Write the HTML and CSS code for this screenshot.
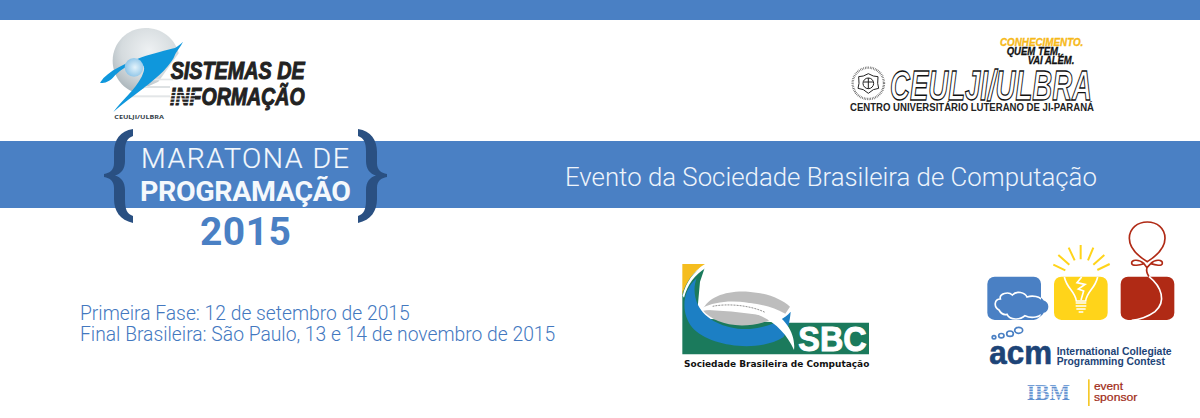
FILE: index.html
```html
<!DOCTYPE html>
<html lang="pt-BR">
<head>
<meta charset="utf-8">
<title>Maratona de Programação 2015</title>
<link rel="stylesheet" href="styles.css">
</head>
<body>
<div class="topbar"></div>
<header class="logos">
  <svg class="logo-si" viewBox="54 18 624 288" role="img" aria-label="Sistemas de Informação">
    <defs>
      <radialGradient id="sphere" cx="0.55" cy="0.35" r="0.7">
        <stop offset="0" stop-color="#eef1f3"/>
        <stop offset="0.6" stop-color="#d5dbde"/>
        <stop offset="1" stop-color="#a9b4ba"/>
      </radialGradient>
      <radialGradient id="eye" cx="0.55" cy="0.5" r="0.55">
        <stop offset="0" stop-color="#e4f3fb"/>
        <stop offset="1" stop-color="#8cc4e8"/>
      </radialGradient>
    </defs>
    <path fill="url(#sphere)" d="M196 24 C142 24 98 68 98 122 C98 165 125 205 165 217 L235 185 L296 100 C285 55 245 24 196 24 Z"/>
    <rect x="190" y="176" width="90" height="5" fill="#e3e6e8"/>
    <rect x="170" y="198" width="100" height="6" fill="#dde1e3"/>
    <rect x="150" y="226" width="120" height="6" fill="#e3e6e8"/>
    <path class="swoosh" d="M60 188 C85 150 140 130 185 112 C220 100 260 90 285 84 C295 78 302 72 309 65 C303 78 293 90 286 102 C275 135 235 170 190 205 C160 228 125 255 100 276 C125 240 165 210 185 170 C198 145 195 130 170 130 C140 135 115 155 100 172 C92 182 75 192 60 188 Z"/>
    <circle cx="162" cy="142" r="28" fill="url(#eye)"/>
    <text class="si-title" x="272" y="178" textLength="402" lengthAdjust="spacingAndGlyphs">SISTEMAS DE</text>
    <text class="si-title" x="270" y="255" textLength="404" lengthAdjust="spacingAndGlyphs">INFORMAÇÃO</text>
    <path class="si-stripes" d="M270 217 H345 M270 227 H345 M270 237 H345 M270 247 H345"/>
    <text class="si-small" x="103" y="298" textLength="149" lengthAdjust="spacingAndGlyphs">CEULJI/ULBRA</text>
  </svg>
  <svg class="logo-ulbra" viewBox="30 33 738 234" role="img" aria-label="CEULJI/ULBRA">
    <text class="ul-yellow" x="480" y="62" textLength="250" lengthAdjust="spacingAndGlyphs">CONHECIMENTO.</text>
    <text class="ul-black" x="500" y="89" textLength="162" lengthAdjust="spacingAndGlyphs">QUEM TEM,</text>
    <text class="ul-black" x="563" y="116" textLength="140" lengthAdjust="spacingAndGlyphs">VAI ALÉM.</text>
    <circle class="seal-dots" cx="85" cy="175" r="47"/>
    <path class="seal-line" d="M85 146 L100 153 L114 155 L113 175 L116 190 L100 194 L85 205 L70 194 L54 190 L57 175 L56 155 L70 153 Z"/>
    <circle class="seal-line" cx="85" cy="175" r="16"/>
    <path class="seal-line" d="M85 159 V191 M71 171 H99"/>
    <text class="ul-outline" x="150" y="226" textLength="606" lengthAdjust="spacingAndGlyphs">CEULJI/ULBRA</text>
    <text class="ul-sub" x="30" y="259" textLength="732" lengthAdjust="spacingAndGlyphs">CENTRO UNIVERSITÁRIO LUTERANO DE JI-PARANÁ</text>
  </svg>
</header>
<section class="band">
  <svg class="brand" viewBox="100 128 290 124" role="img" aria-label="Maratona de Programação 2015">
    <path class="brace" d="M133 129 C120 131 114 140 114 152 L114 163 C114 170 110 173 104 174 L104 177 C110 178 114 181 114 188 L114 199 C114 211 120 220 133 223 L133 216 C127 214 125 209 125 200 L125 190 C125 182 121 177 115 175.5 C121 174 125 169 125 161 L125 151 C125 143 127 138 133 136 Z"/>
    <path class="brace" d="M358 129 C371 131 377 140 377 152 L377 163 C377 170 381 173 387 174 L387 177 C381 178 377 181 377 188 L377 199 C377 211 371 220 358 223 L358 216 C364 214 366 209 366 200 L366 190 C366 182 370 177 376 175.5 C370 174 366 169 366 161 L366 151 C366 143 364 138 358 136 Z"/>
    <text class="b-line1" x="141" y="168" textLength="208">MARATONA DE</text>
    <text class="b-line2" x="140" y="201" textLength="211">PROGRAMAÇÃO</text>
    <text class="b-year" x="200" y="245" textLength="91">2015</text>
  </svg>
  <p class="event">Evento da Sociedade Brasileira de Computação</p>
</section>
<section class="lower">
  <div class="dates">
    <p>Primeira Fase: 12 de setembro de 2015</p>
    <p>Final Brasileira: São Paulo, 13 e 14 de novembro de 2015</p>
  </div>
  <svg class="logo-sbc" viewBox="33 24 570 321" role="img" aria-label="SBC">
    <path fill="#1b7a5c" d="M37 110 C50 70 75 45 105 36 L90 80 L80 190 L340 203 H597 V298 H37 Z"/>
    <path fill="#f5bd1f" d="M37 27 H105 C70 48 45 85 37 120 Z"/>
    <path fill="#fff" d="M105 30 C72 48 48 80 38 122 L42 128 C52 88 75 58 108 38 Z"/>
    <path fill="#1c7fc4" d="M80 70 C38 105 30 170 66 217 C118 278 270 292 340 247 C355 225 360 195 362 170 C340 195 300 215 240 222 C170 226 105 195 84 150 C72 125 70 95 80 70 Z"/>
    <path fill="#bdbdbd" d="M98 165 C115 125 170 106 235 110 C290 114 335 132 360 155 L346 176 C300 150 240 140 180 142 C150 144 120 152 98 165 Z"/>
    <path fill="#bdbdbd" d="M98 165 C130 205 215 232 315 190 C260 175 150 165 98 165 Z"/>
    <path fill="#fff" d="M96 160 C150 130 240 135 300 165 C345 190 378 235 372 285 C350 235 310 195 260 178 C200 162 140 160 96 168 Z"/>
    <path fill="none" stroke="#222" stroke-width="1.5" stroke-dasharray="6 3" d="M128 154 C170 145 240 150 285 172"/>
    <text class="sbc-big" x="385" y="289" textLength="205" lengthAdjust="spacingAndGlyphs">SBC</text>
    <text class="sbc-sub" x="42" y="335" textLength="556" lengthAdjust="spacingAndGlyphs">Sociedade Brasileira de Computação</text>
  </svg>
  <svg class="logo-acm" viewBox="30 15 570 564" role="img" aria-label="ACM ICPC">
    <defs>
      <clipPath id="blue-box"><rect x="37" y="185" width="161" height="130" rx="22"/></clipPath>
    </defs>
    <rect class="acm-blue" x="37" y="185" width="161" height="130" rx="22"/>
    <rect class="acm-yellow" x="237" y="185" width="161" height="130" rx="22"/>
    <rect class="acm-red" x="437" y="185" width="161" height="130" rx="22"/>
    <path class="cloud" d="M72 285 C55 275 58 252 76 252 C72 236 100 228 112 240 C125 226 150 232 156 246 C172 240 196 244 204 258 C222 264 222 286 204 292 C198 306 170 312 150 302 C135 316 105 316 96 298 C88 300 78 296 72 285 Z"/>
    <g clip-path="url(#blue-box)">
      <path class="cloud-in" d="M72 285 C55 275 58 252 76 252 C72 236 100 228 112 240 C125 226 150 232 156 246 C172 240 196 244 204 258 C222 264 222 286 204 292 C198 306 170 312 150 302 C135 316 105 316 96 298 C88 300 78 296 72 285 Z"/>
    </g>
    <ellipse class="bubble" cx="131" cy="346" rx="12" ry="9"/>
    <ellipse class="bubble" cx="105" cy="356" rx="10" ry="8"/>
    <ellipse class="bubble" cx="79" cy="362" rx="8" ry="6.5"/>
    <ellipse class="bubble" cx="57" cy="367" rx="5.5" ry="5"/>
    <path class="bulb" d="M268 186 C276 222 300 228 304 258 H332 C336 228 360 222 368 186"/>
    <path class="bulb" d="M320 186 L306 203 L330 208 L310 222 L326 228 L318 255"/>
    <path class="bulb" d="M302 264 H334 M302 273 H334 M304 282 H332 M311 291 H325"/>
    <path class="rays" d="M317 90 V133 M281 98 L299 136 M355 98 L339 136 M250 120 L283 149 M388 120 L355 149 M235 149 L271 166 M404 147 L367 165"/>
    <path class="balloon" d="M517 140 C480 118 463 95 463 70 C463 40 488 21 517 21 C546 21 570 40 570 70 C570 95 552 118 517 140 Z"/>
    <path class="balloon" d="M507 146 C490 130 468 135 470 145 C472 155 495 150 507 146 L516 158 L527 146 C540 150 562 155 562 145 C564 135 542 130 527 146 M516 158 C512 170 518 178 522 185"/>
    <path class="string" d="M522 185 C560 215 575 260 540 290 C520 305 490 315 470 316"/>
    <text class="acm-word" x="43" y="447" textLength="188" lengthAdjust="spacingAndGlyphs">acm</text>
    <text class="acm-line" x="245" y="420" textLength="345" lengthAdjust="spacingAndGlyphs">International Collegiate</text>
    <text class="acm-line" x="245" y="450" textLength="325" lengthAdjust="spacingAndGlyphs">Programming Contest</text>
    <text class="ibm" x="155" y="555" textLength="130" lengthAdjust="spacingAndGlyphs">IBM</text>
    <path class="ibm-stripes" d="M150 514 H290 M150 522 H290 M150 530 H290 M150 538 H290 M150 546 H290"/>
    <rect class="divider" x="339" y="493" width="5" height="80"/>
    <text class="sponsor" x="357" y="525" textLength="87" lengthAdjust="spacingAndGlyphs">event</text>
    <text class="sponsor" x="357" y="557" textLength="130" lengthAdjust="spacingAndGlyphs">sponsor</text>
  </svg>
</section>
</body>
</html>
```

FILE: styles.css
```css
* { box-sizing: border-box; }
html, body { margin: 0; padding: 0; }
body {
  width: 1200px;
  height: 418px;
  overflow: hidden;
  background: #fff;
  font-family: Roboto, "Liberation Sans", sans-serif;
}
p { margin: 0; }
svg { display: block; flex: none; overflow: visible; }

.topbar { height: 20px; background: #4a80c4; }

.logos {
  height: 121px;
  padding: 6px 104px 0 98px;
  display: flex;
  justify-content: space-between;
  align-items: flex-start;
}
.logo-si { width: 208px; height: 96px; }
.logo-ulbra { width: 246px; height: 78px; margin-top: 10px; }

.band {
  height: 67px;
  background: #4a80c4;
  padding-left: 100px;
  display: flex;
  align-items: flex-start;
}
.brand { width: 290px; height: 124px; margin-top: -13px; }
.event {
  margin: 20px 0 0 175px;
  color: #eef4fb;
  font-size: 25.8px;
  font-weight: 300;
  line-height: 32px;
  white-space: nowrap;
}

.lower {
  height: 210px;
  padding: 12px 25px 0 80px;
  display: flex;
  align-items: flex-start;
}
.dates {
  width: 601px;
  margin-top: 83px;
  color: #4378bf;
  font-size: 19.3px;
  font-weight: 300;
  line-height: 21px;
  white-space: nowrap;
}
.logo-sbc { width: 190px; height: 107px; margin-top: 43px; }
.logo-acm { width: 190px; height: 188px; margin-left: auto; }

/* Sistemas de Informação */
.swoosh { fill: #0f97dc; }
.si-title { font: italic 700 74px "Liberation Sans", sans-serif; fill: #222; stroke: #222; stroke-width: 3; }
.si-stripes { fill: none; stroke: #fff; stroke-width: 3; }
.si-small { font: 700 18px "Open Sans", sans-serif; fill: #33404a; }

/* CEULJI/ULBRA */
.ul-yellow { font: italic 700 30px "Liberation Sans", sans-serif; fill: #f6b91a; stroke: #f6b91a; stroke-width: 1; }
.ul-black { font: italic 700 30px "Liberation Sans", sans-serif; fill: #111; stroke: #111; stroke-width: 0.8; }
.ul-outline { font: italic 700 130px "Liberation Sans", sans-serif; fill: #fff; stroke: #111; stroke-width: 4; }
.ul-sub { font: 700 30px "Liberation Sans", sans-serif; fill: #222; }
.seal-dots { fill: none; stroke: #555; stroke-width: 7; stroke-dasharray: 2 3; }
.seal-line { fill: none; stroke: #222; stroke-width: 3; }

/* Maratona */
.brace { fill: #2a5082; }
.b-line1 { font: 300 28.5px Roboto, sans-serif; fill: #f4f8fc; stroke: #f4f8fc; stroke-width: 0.2; }
.b-line2 { font: 700 28.5px Roboto, sans-serif; fill: #f4f8fc; }
.b-year { font: 700 39px Roboto, sans-serif; fill: #4a80c4; }

/* SBC */
.sbc-big { font: 700 104px "Liberation Sans", sans-serif; fill: #fff; stroke: #fff; stroke-width: 3; }
.sbc-sub { font: 700 28px "DejaVu Sans", sans-serif; fill: #111; }

/* ACM */
.acm-blue { fill: #4a80c4; }
.acm-yellow { fill: #ffd41a; }
.acm-red { fill: #b02a15; }
.cloud { fill: #4a80c4; stroke: #4a80c4; stroke-width: 5; }
.cloud-in { fill: #4a80c4; stroke: #fff; stroke-width: 5; }
.bubble { fill: #fff; stroke: #4a80c4; stroke-width: 5; }
.bulb { fill: none; stroke: #fff; stroke-width: 5; }
.rays { fill: none; stroke: #ffd41a; stroke-width: 6; }
.balloon { fill: none; stroke: #b02a15; stroke-width: 5; }
.string { fill: none; stroke: #fff; stroke-width: 5; }
.acm-word { font: 700 100px "Liberation Sans", sans-serif; fill: #1d4477; stroke: #1d4477; stroke-width: 2; }
.acm-line { font: 700 34px "Liberation Sans", sans-serif; fill: #1d4477; }
.ibm { font: 700 68px "Liberation Serif", serif; fill: #5e8fcf; }
.ibm-stripes { fill: none; stroke: #fff; stroke-width: 2.5; }
.divider { fill: #f5c82a; }
.sponsor { font: 400 32px "Liberation Sans", sans-serif; fill: #a02a15; stroke: #a02a15; stroke-width: 0.6; }
```
